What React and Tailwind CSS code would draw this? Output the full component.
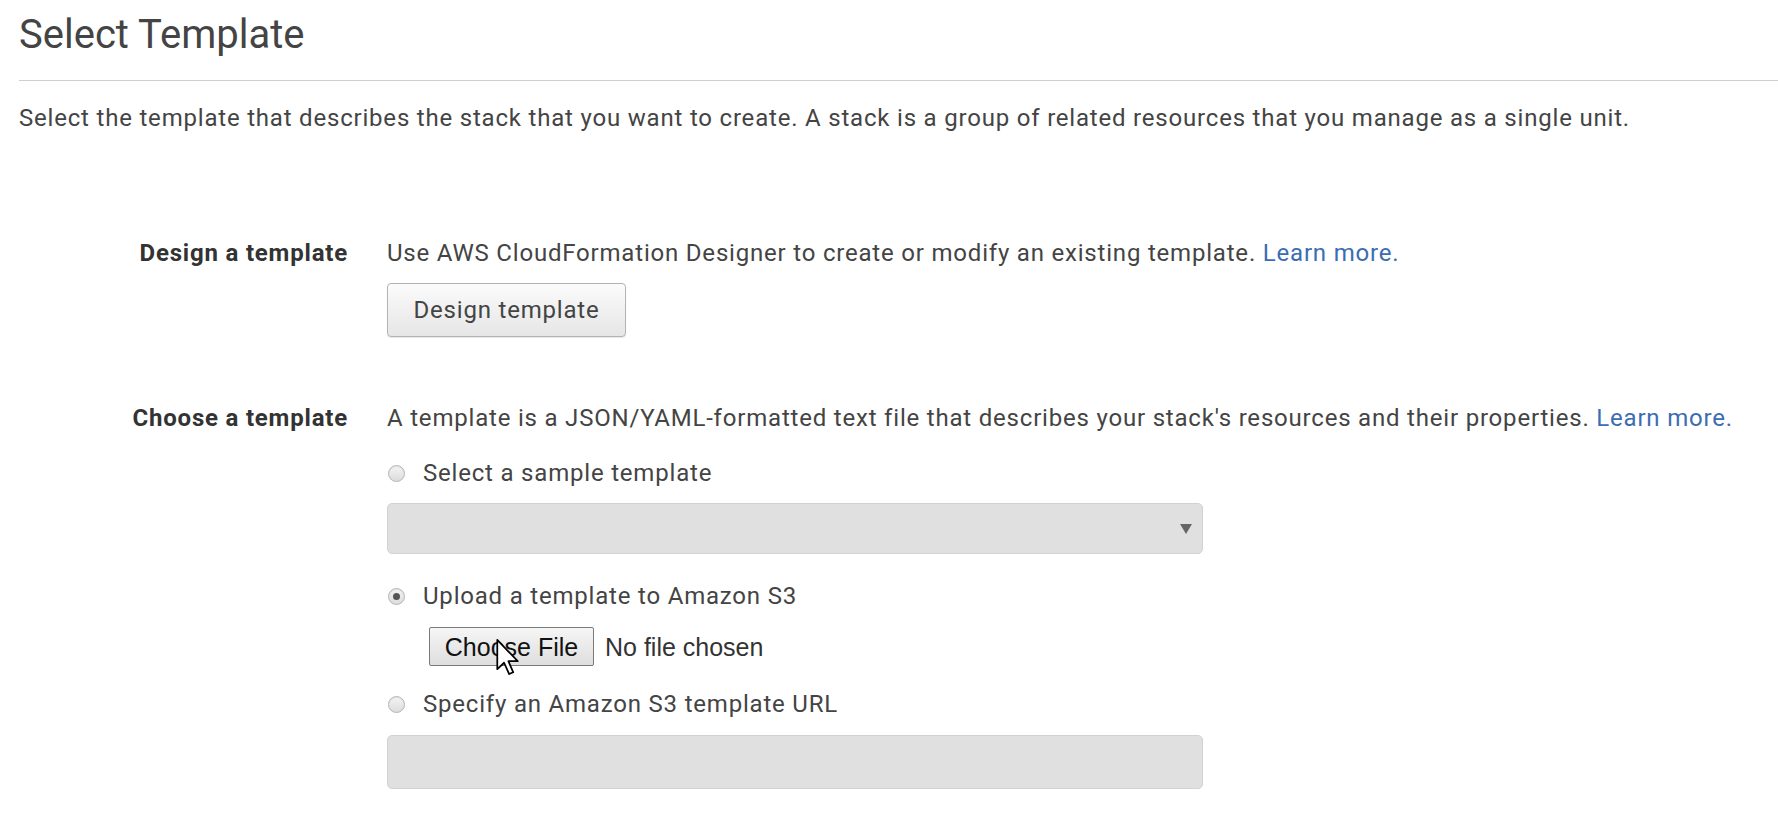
import { useState } from "react";

const Radio = ({ checked, label, onClick }) => (
    <label className="flex items-center h-[28px] cursor-pointer" onClick={onClick}>
        <span className="w-[17px] h-[17px] ml-[1px] rounded-full border border-[#b5b5b5] bg-gradient-to-b from-[#f4f4f4] to-[#dcdcdc] flex items-center justify-center shadow-[inset_0_1px_1px_rgba(0,0,0,0.08)]">
            {checked && <span className="w-[7px] h-[7px] rounded-full bg-[#555]" />}
        </span>
        <span className="ml-[18px] text-[#444]">{label}</span>
    </label>
);

// mouse pointer sitting over the file button
const Cursor = () => (
    <svg className="absolute left-[67px] top-[12px] pointer-events-none" width="24" height="37" viewBox="0 0 12 19">
        <path
            d="M0.5 0.5 L0.5 15.5 L4 12.2 L6.6 18 L8.7 17.1 L6.2 11.4 L11 11.4 Z"
            fill="#fff"
            stroke="#000"
            strokeWidth="0.9"
            strokeLinejoin="round"
        />
    </svg>
);

const Row = ({ label, children }) => (
    <div className="flex">
        <div className="w-[348px] text-right font-bold text-[#333] shrink-0">{label}</div>
        <div className="ml-[39px] flex-1">{children}</div>
    </div>
);

export default function App() {
    const [source, setSource] = useState("upload");

    return (
        <div className="min-h-screen bg-white font-['Roboto',sans-serif] text-[24px] leading-[28px] tracking-[0.8px] text-[#444]">
            <div className="pl-[19px] pt-[11px]">
                <h1 className="text-[40px] leading-[48px] tracking-normal text-[#444] font-normal">Select Template</h1>
            </div>
            <div className="ml-[19px] mt-[21px] border-t border-[#cfcfcf]" />
            <p className="pl-[19px] mt-[23px] whitespace-nowrap">
                Select the template that describes the stack that you want to create. A stack is a group of related resources that you manage as a single unit.
            </p>

            <div className="mt-[107px]">
                <Row label="Design a template">
                    <div className="whitespace-nowrap">
                        Use AWS CloudFormation Designer to create or modify an existing template.{" "}
                        <a className="text-[#3b6db3]">Learn more.</a>
                    </div>
                    <button className="mt-[16px] w-[239px] h-[54px] rounded-[4px] border border-[#b3b3b3] bg-gradient-to-b from-[#fbfbfb] to-[#e6e6e6] text-[#444] shadow-[0_1px_1px_rgba(0,0,0,0.1)]">
                        Design template
                    </button>
                </Row>
            </div>

            <div className="mt-[67px]">
                <Row label="Choose a template">
                    <div className="whitespace-nowrap">
                        A template is a JSON/YAML-formatted text file that describes your stack's resources and their properties.{" "}
                        <a className="text-[#3b6db3]">Learn more.</a>
                    </div>

                    <div className="mt-[27px]">
                        <Radio checked={source === "sample"} label="Select a sample template" onClick={() => setSource("sample")} />
                    </div>
                    <div className="mt-[16px] w-[816px] h-[51px] rounded-[5px] border border-[#d2d2d2] bg-[#e0e0e0] flex items-center justify-end pr-[10px]">
                        <svg width="12" height="10" viewBox="0 0 12 10">
                            <path d="M0 0 H12 L6 10 Z" fill="#666" />
                        </svg>
                    </div>

                    <div className="mt-[28px]">
                        <Radio checked={source === "upload"} label="Upload a template to Amazon S3" onClick={() => setSource("upload")} />
                    </div>
                    <div className="relative mt-[17px] ml-[42px] flex items-center h-[39px] tracking-normal">
                        <button className="h-[39px] w-[165px] border border-[#7a7a7a] rounded-[2px] bg-gradient-to-b from-[#f6f6f6] to-[#dedede] text-[#111] text-[25px] font-['Liberation_Sans',sans-serif]">
                            Choose File
                        </button>
                        <span className="ml-[11px] text-[25px] font-['Liberation_Sans',sans-serif] text-[#333]">No file chosen</span>
                        <Cursor />
                    </div>

                    <div className="mt-[24px]">
                        <Radio checked={source === "url"} label="Specify an Amazon S3 template URL" onClick={() => setSource("url")} />
                    </div>
                    <div className="mt-[17px] w-[816px] h-[54px] rounded-[5px] border border-[#d2d2d2] bg-[#e0e0e0]" />
                </Row>
            </div>
        </div>
    );
}
